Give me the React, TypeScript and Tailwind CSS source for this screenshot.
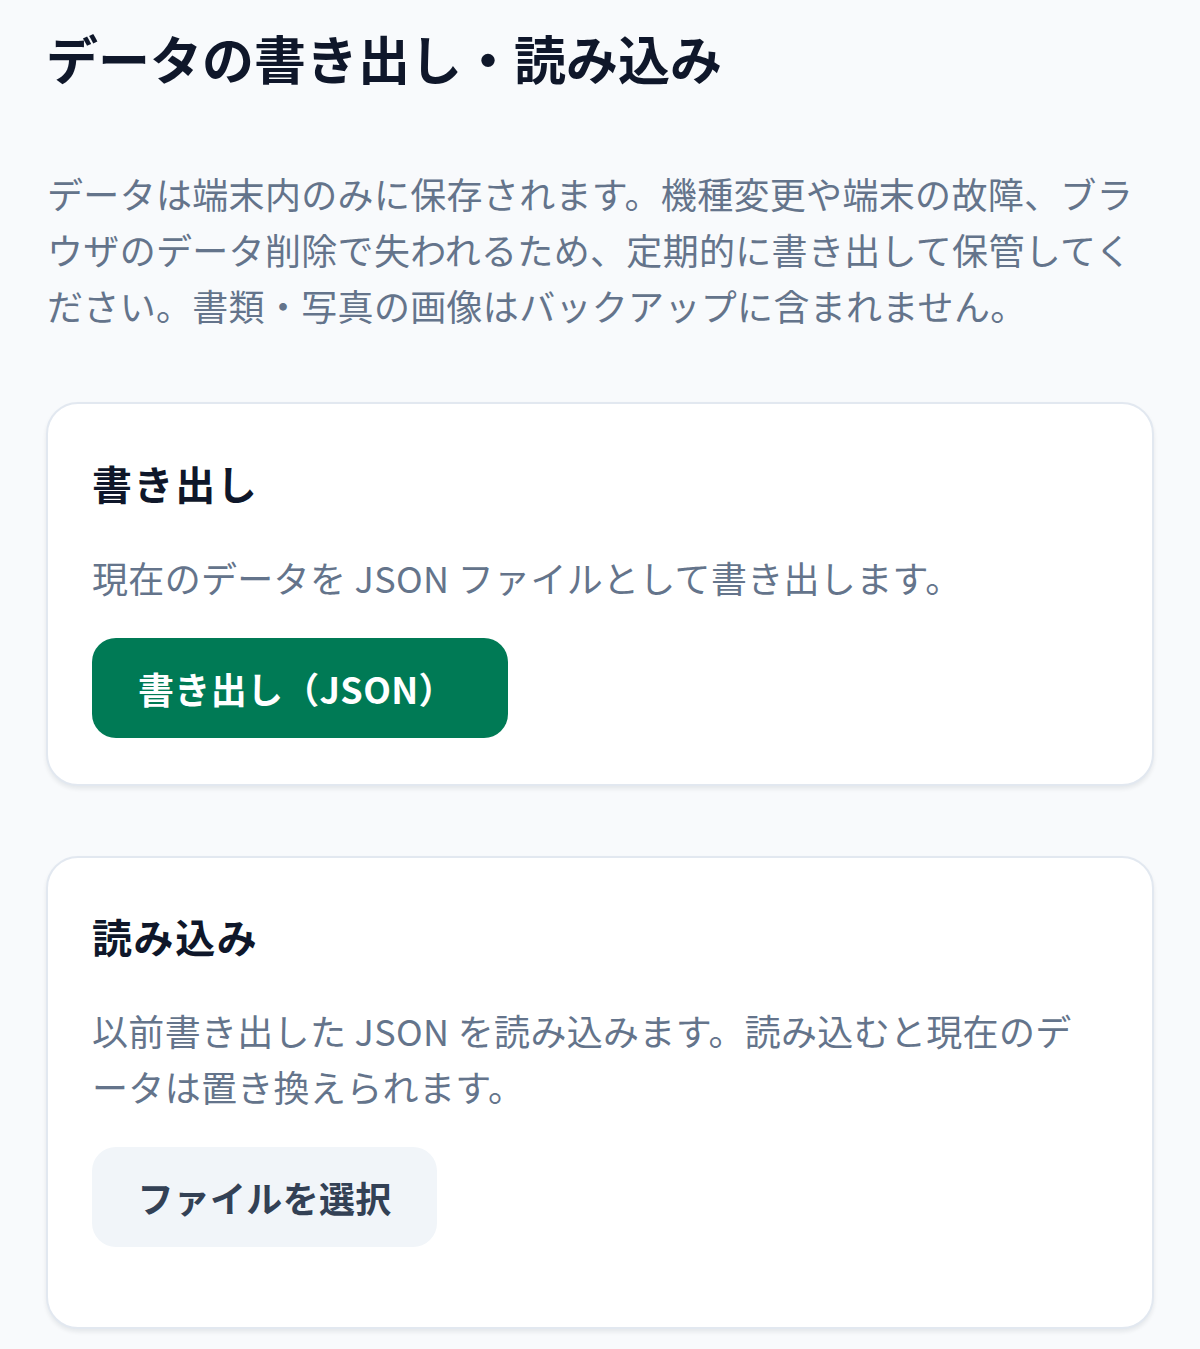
import React from "react";

const font = { fontFamily: '"Noto Sans CJK JP", "Noto Sans", sans-serif' };

export default function App() {
  return (
    <div
      className="min-h-[1349px] bg-[#f8fafc] px-[46px] pt-[26px] pb-[24px] tracking-[0.02em]"
      style={font}
    >
      <h1 className="text-[52px] leading-[64px] font-bold text-[#0f172a] tracking-normal">
        データの書き出し・読み込み
      </h1>
      <p className="mt-[75px] pl-[1px] text-[36px] leading-[56px] text-[#64748b]">
        データは端末内のみに保存されます。機種変更や端末の故障、ブラウザのデータ削除で失われるため、定期的に書き出して保管してください。書類・写真の画像はバックアップに含まれません。
      </p>

      <section className="mt-[69px] rounded-[32px] border-2 border-[#e2e8f0] bg-white px-[44px] pt-[49px] pb-[46px] shadow-[0_3px_4px_rgba(15,23,42,0.08)]">
        <h2 className="text-[40px] leading-[60px] font-bold text-[#0f172a] tracking-[0.04em]">
          書き出し
        </h2>
        <p className="mt-[36px] pr-[12px] text-[36px] leading-[56px] text-[#64748b]">
          現在のデータを JSON ファイルとして書き出します。
        </p>
        <button className="mt-[33px] h-[100px] w-[416px] rounded-[24px] bg-[#007a55] pl-[46px] text-left text-[36px] font-bold text-white">
          書き出し（JSON）
        </button>
      </section>

      <section className="mt-[70px] rounded-[32px] border-2 border-[#e2e8f0] bg-white px-[44px] pt-[48px] pb-[80px] shadow-[0_3px_4px_rgba(15,23,42,0.08)]">
        <h2 className="text-[40px] leading-[60px] font-bold text-[#0f172a] tracking-[0.04em]">
          読み込み
        </h2>
        <p className="mt-[36px] pr-[14px] text-[36px] leading-[56px] text-[#64748b]">
          以前書き出した JSON を読み込みます。読み込むと現在のデータは置き換えられます。
        </p>
        <button className="mt-[33px] h-[100px] w-[345px] rounded-[24px] bg-[#f1f5f9] text-[36px] font-bold text-[#334155]">
          ファイルを選択
        </button>
      </section>
    </div>
  );
}
